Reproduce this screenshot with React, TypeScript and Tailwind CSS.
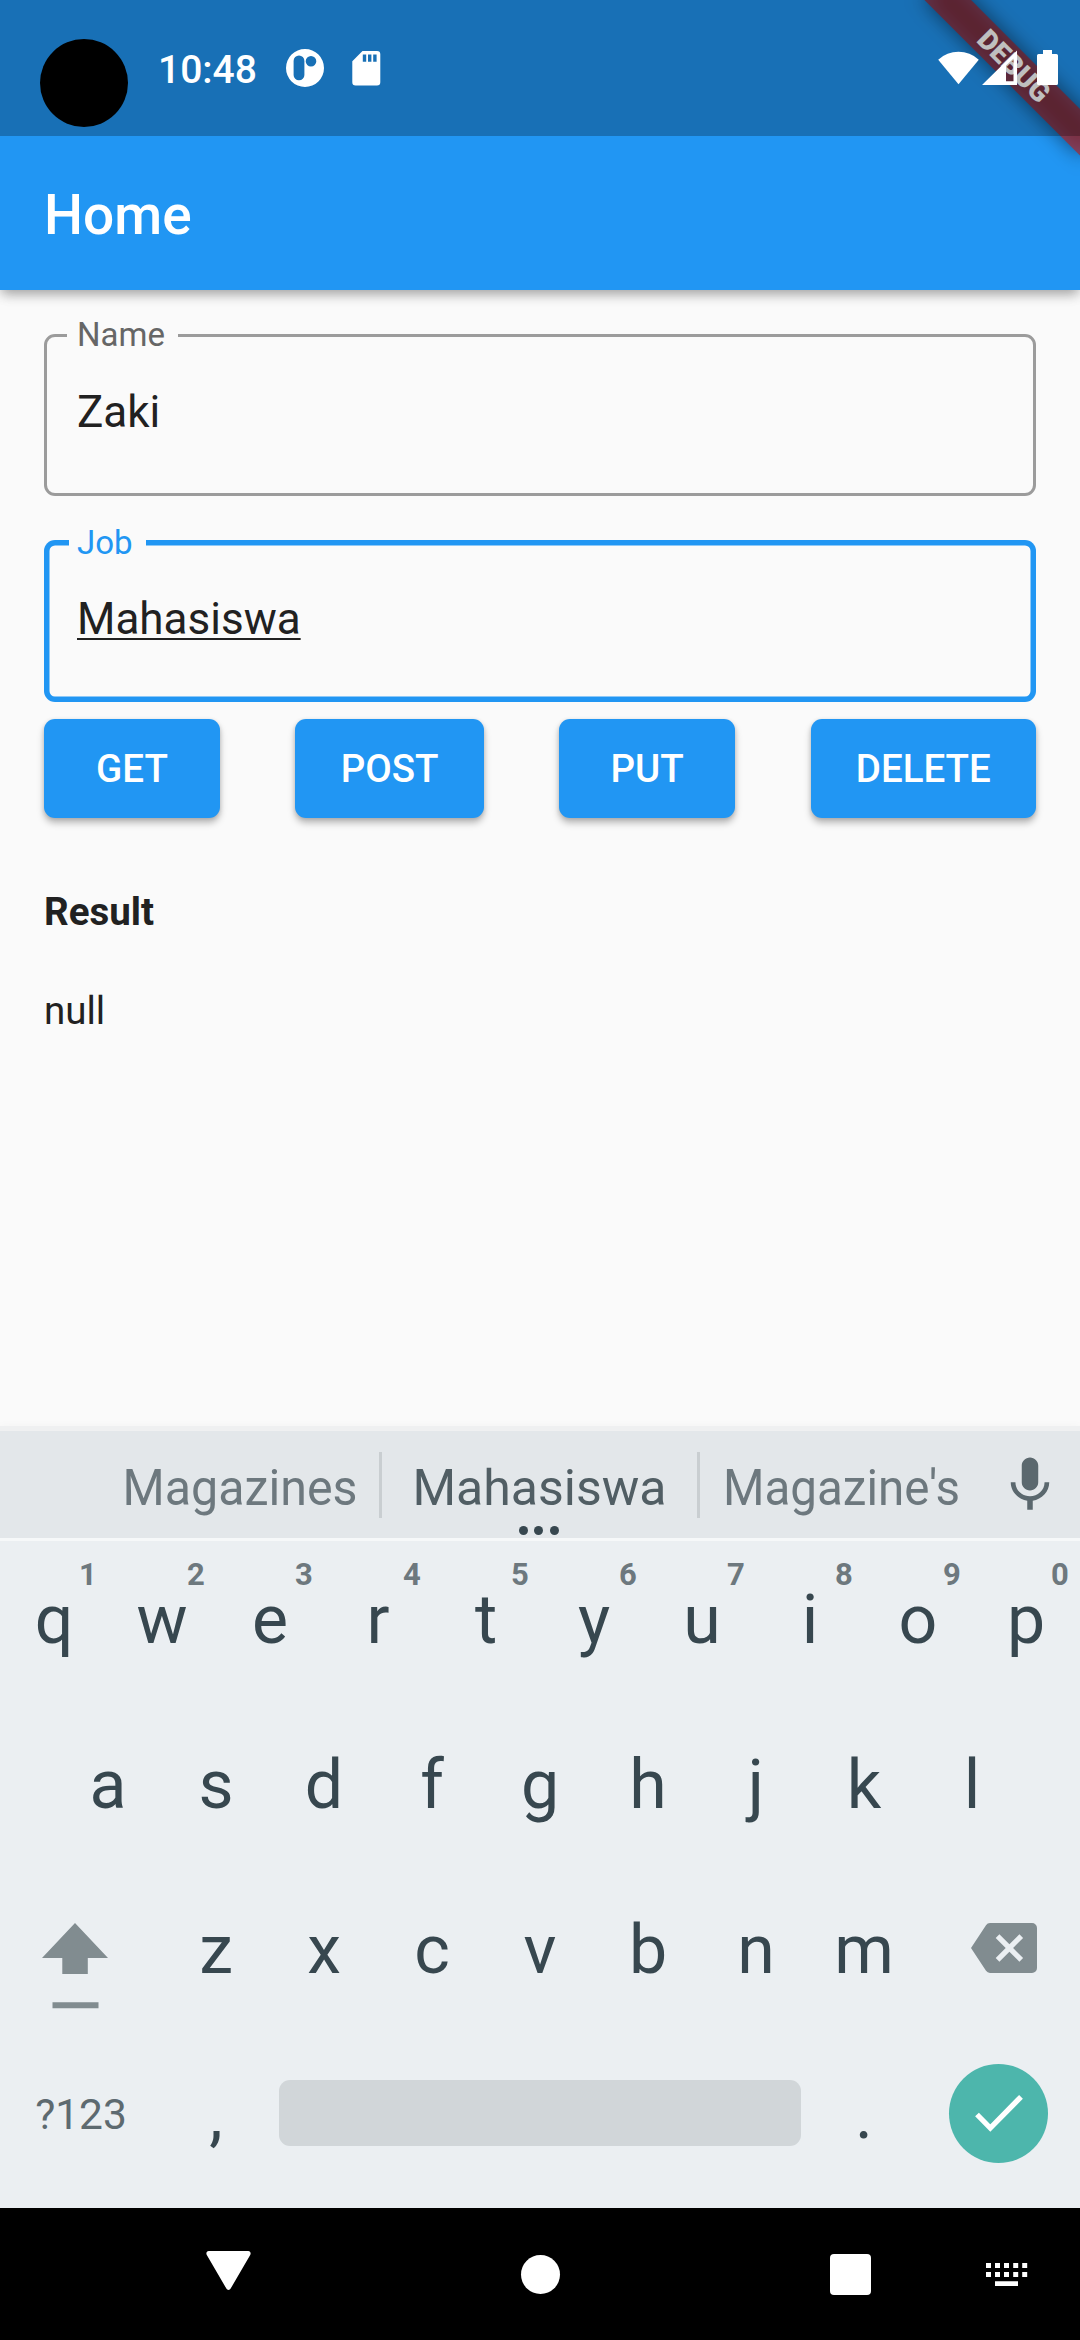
import React from "react";

const topRow = ["q", "w", "e", "r", "t", "y", "u", "i", "o", "p"];
const hints = ["1", "2", "3", "4", "5", "6", "7", "8", "9", "0"];
const middleRow = ["a", "s", "d", "f", "g", "h", "j", "k", "l"];
const bottomRow = ["z", "x", "c", "v", "b", "n", "m"];

function DebugBanner() {
  return (
    <div className="absolute left-[970px] top-0 h-0 w-[220px] origin-[110px_0] rotate-45">
      <div className="absolute left-0 top-[77px] h-[33px] w-[220px] bg-black/50 blur-[10px]" />
      <div className="absolute left-0 top-[77px] h-[33px] w-[220px] bg-[#b71c1c]/63 text-center text-[28px] font-black leading-[33px] text-white">
        DEBUG
      </div>
    </div>
  );
}

function StatusBar() {
  return (
    <div className="relative flex h-[136px] items-start bg-black/25 text-white">
      <div className="ml-10 mt-[39px] size-[88px] rounded-full bg-black" />
      <span className="ml-[30px] mt-[47px] w-[98px] whitespace-nowrap text-[39px] font-medium leading-[46px]">10:48</span>
      <svg className="ml-[30px] mt-[49px]" width="38" height="38" viewBox="0 0 38 38" fill="currentColor">
        <path
          fillRule="evenodd"
          d="M19 0a19 19 0 1 0 0 38a19 19 0 1 0 0-38zM13 6.5a5.4 5.4 0 0 1 5.4 5.4v14a5.4 5.4 0 0 1-10.8 0v-14a5.4 5.4 0 0 1 5.4-5.4zM25 7a5.3 5.3 0 1 1 0 10.6a5.3 5.3 0 1 1 0-10.6z"
        />
      </svg>
      <svg className="ml-[28px] mt-[51px]" width="29" height="35" viewBox="0 0 29 35" fill="currentColor">
        <path
          fillRule="evenodd"
          d="M10.5 0H25a3.3 3.3 0 0 1 3.3 3.3v28a3.3 3.3 0 0 1-3.3 3.3H3.6a3.3 3.3 0 0 1-3.3-3.3V10.2zM10.8 3.4v7.3h3.4V3.4zM16 3.4v7.3h3.4V3.4zM21.2 3.4v7.3h3.4V3.4z"
        />
      </svg>
      <div className="flex-1" />
      <svg className="mt-[50px]" width="41" height="35" viewBox="0 0 41 35" fill="currentColor">
        <path d="M0.200 9.700A30 30 0 0 1 40.800 9.700L20.500 34.200z" />
      </svg>
      <svg className="ml-[3px] mt-[50px]" width="36" height="35" viewBox="0 0 36 35" fill="currentColor">
        <path fillRule="evenodd" d="M0 35L35 0.600V35zM24 15.500V31.200H31.500V8.500z" />
      </svg>
      <svg className="ml-[19px] mr-[22px] mt-[50px]" width="21" height="35" viewBox="0 0 21 35" fill="currentColor">
        <path d="M6 0h9v4h4.400a1.600 1.600 0 0 1 1.600 1.600v27.800a1.600 1.600 0 0 1-1.600 1.600H1.600a1.600 1.600 0 0 1-1.600-1.600V5.600a1.600 1.600 0 0 1 1.600-1.600H6z" />
      </svg>
    </div>
  );
}

function ActionButton({ label }: { label: string }) {
  return (
    <button className="h-[99px] min-w-[176px] rounded-[11px] bg-[#2196f3] px-[45.2px] text-[38.5px] font-medium leading-[45px] text-white shadow-[0_5px_7px_rgba(0,0,0,0.26),0_1px_4px_rgba(0,0,0,0.12)]">
      {label}
    </button>
  );
}

function Key({ label }: { label: string }) {
  return <div className="w-[108px] text-center text-[68px] leading-[80px] text-[#37474f]">{label}</div>;
}

function Keyboard() {
  return (
    <div className="flex h-[782px] flex-col bg-[#ebeff2] shadow-[0_0_9px_rgba(0,0,0,0.03)]">
      <div className="h-[5px] bg-[#eff0f1]" />
      <div className="relative flex h-[107px] bg-[#e3e7ea] text-[50px] leading-[59px] text-[#6d787e]">
        <div className="ml-[99px] mt-[28px] w-[282px] scale-x-[0.967] text-center">Magazines</div>
        <div className="ml-[-2px] mt-[21px] h-[66px] w-[3px] bg-[#c9ced1]" />
        <div className="mt-[28px] w-[315px] text-center text-[#515e64]">Mahasiswa</div>
        <div className="mt-[21px] h-[66px] w-[3px] bg-[#c9ced1]" />
        <div className="mt-[28px] w-[283px] scale-x-[0.95] text-center">Magazine's</div>
        <svg className="ml-[14px] mt-[21px]" width="66" height="66" viewBox="0 0 24 24" fill="#5b686e">
          <path d="M12 14c1.660 0 2.990-1.340 2.990-3L15 5c0-1.660-1.340-3-3-3S9 3.340 9 5v6c0 1.660 1.340 3 3 3zm5.300-3c0 3-2.540 5.100-5.300 5.100S6.700 14 6.700 11H5c0 3.410 2.720 6.230 6 6.720V21h2v-3.280c3.280-.48 6-3.300 6-6.720h-1.700z" />
        </svg>
        <div className="absolute left-[519px] top-[95px] flex gap-[6.4px]">
          <i className="size-[9px] rounded-full bg-[#37474f]" />
          <i className="size-[9px] rounded-full bg-[#37474f]" />
          <i className="size-[9px] rounded-full bg-[#37474f]" />
        </div>
      </div>
      <div className="h-[3px] bg-[#f6f8f9]" />
      <div className="flex h-[161px] pt-[39px]">
        {topRow.map((k, i) => (
          <div key={k} className="relative">
            <Key label={k} />
            <span className="absolute left-[68px] top-[-23px] w-[40px] text-center text-[31px] font-bold leading-[36px] text-[#6d787e]">
              {hints[i]}
            </span>
          </div>
        ))}
      </div>
      <div className="flex h-[165px] items-center justify-center">
        {middleRow.map((k) => (
          <Key key={k} label={k} />
        ))}
      </div>
      <div className="flex h-[165px] items-center">
        <div className="w-[162px] self-start pl-[42px] pt-[56px]">
          <svg width="66" height="86" viewBox="0 0 66 86" fill="#818c90">
            <path d="M33 0L66 35H45.800V51H20.300V35H0zM10.500 79.200H56.500V85.200H10.500z" />
          </svg>
        </div>
        {bottomRow.map((k) => (
          <Key key={k} label={k} />
        ))}
        <div className="w-[162px] self-start pl-[53px] pt-[56px]">
          <svg width="66" height="50" viewBox="0 0 66 50" fill="#818c90">
            <path
              fillRule="evenodd"
              d="M19 0H61a5 5 0 0 1 5 5V45a5 5 0 0 1-5 5H19a5 5 0 0 1-4-2.200L0 25L15 2.200A5 5 0 0 1 19 0zM28.400 11.300L24.700 15L34.700 25L24.700 35L28.400 38.700L38.400 28.700L48.400 38.700L52.100 35L42.100 25L52.100 15L48.400 11.300L38.400 21.300z"
            />
          </svg>
        </div>
      </div>
      <div className="flex h-[165px] items-center">
        <div className="w-[162px] text-center text-[42.5px] leading-[50px] text-[#5d6a70]">?123</div>
        <Key label="," />
        <div className="mx-[9px] mb-[3px] h-[66px] w-[522px] rounded-[11px] bg-[#d1d6d9]" />
        <Key label="." />
        <div className="mb-[2px] ml-[31px] flex size-[99px] items-center justify-center rounded-full bg-[#4db6ac]">
          <svg width="99" height="99" viewBox="0 0 99 99" fill="none" stroke="white" strokeWidth="5.300">
            <path d="M28 50.500L41.300 64L72 32.800" />
          </svg>
        </div>
      </div>
    </div>
  );
}

function NavigationBar() {
  return (
    <div className="flex h-[132px] items-start bg-black text-white">
      <svg className="ml-[206px] mt-[43px]" width="45" height="40" viewBox="0 0 45 40" fill="currentColor">
        <path d="M2.800 0H42.200C44.400 0 45.200 2.200 44.200 4L24.800 37.300C23.600 39.600 21.400 39.600 20.200 37.300L0.800 4C-0.200 2.200 0.600 0 2.800 0z" />
      </svg>
      <div className="ml-[270px] mt-[47px] size-[39px] rounded-full bg-white" />
      <div className="ml-[270px] mt-[46px] size-[41px] rounded-[4px] bg-white" />
      <svg className="ml-[115px] mt-[55px]" width="42" height="24" viewBox="0 0 42 24" fill="currentColor">
        <path d="M0 0h5v5h-5zM9 0h5v5h-5zM18 0h5v5h-5zM27.200 0h5v5h-5zM36.200 0h5v5h-5zM0 9h5v5h-5zM9 9h5v5h-5zM18 9h5v5h-5zM27.200 9h5v5h-5zM36.200 9h5v5h-5zM9 18.300h23v4.700h-23z" />
      </svg>
    </div>
  );
}

export default function App() {
  return (
    <div className="relative flex h-[2340px] w-[1080px] flex-col overflow-hidden bg-[#fafafa] font-['Roboto',sans-serif]">
      <header className="relative h-[290px] bg-[#2196f3] shadow-[0_6px_11px_-2px_rgba(0,0,0,0.28),0_3px_14px_rgba(0,0,0,0.12)]">
        <DebugBanner />
        <StatusBar />
        <h1 className="pl-[44px] pt-[47px] text-[55px] font-medium leading-[64px] text-white">Home</h1>
      </header>

      <main className="flex flex-1 flex-col px-[44px] pt-[44px] text-[#212121]">
        <div className="relative h-[162px] rounded-[11px] border-[3px] border-[#9b9b9b] pl-[30px] pt-[49px] text-[44px] leading-[52px]">
          <span className="absolute left-[20px] top-[-22px] w-[111px] bg-[#fafafa] pl-[10px] text-[33px] leading-[39px] text-[#666666]">
            Name
          </span>
          Zaki
        </div>
        <div className="relative mt-[44px] h-[162px] rounded-[11px] pl-[33px] pt-[53px] text-[44px] leading-[52px] shadow-[inset_0_0_0_5.5px_#2196f3]">
          <span className="absolute left-[25px] top-[-17px] w-[77px] bg-[#fafafa] pl-[8px] text-[33px] leading-[39px] text-[#2196f3]">
            Job
          </span>
          <span className="underline decoration-2 underline-offset-[4px] [text-decoration-skip-ink:none]">Mahasiswa</span>
        </div>

        <div className="mt-[17px] flex justify-between">
          <ActionButton label="GET" />
          <ActionButton label="POST" />
          <ActionButton label="PUT" />
          <ActionButton label="DELETE" />
        </div>

        <h2 className="mt-[71px] text-[38.5px] font-bold leading-[45px]">Result</h2>
        <p className="mt-[54px] text-[38.5px] leading-[45px]">null</p>
      </main>

      <Keyboard />
      <NavigationBar />
    </div>
  );
}
